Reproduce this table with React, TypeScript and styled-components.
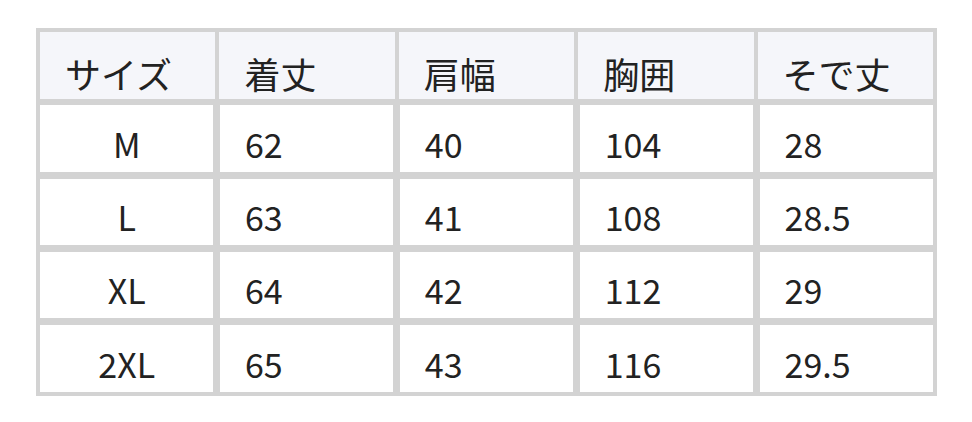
import styled, { createGlobalStyle } from 'styled-components';

const GlobalStyle = createGlobalStyle`
  body {
    margin: 0;
    background: #ffffff;
    font-family: "Noto Sans CJK JP", "Noto Sans", sans-serif;
  }
`;

const Page = styled.div`
  width: 972px;
  height: 422px;
  padding: 28px 0 0 36px;
  box-sizing: border-box;
`;

const Table = styled.div`
  width: 901px;
  box-sizing: border-box;
  padding: 4px;
  background: #d3d3d3;
  display: flex;
  flex-direction: column;
  gap: 6.7px;
`;

const Row = styled.div<{ $header?: boolean }>`
  display: grid;
  grid-template-columns: repeat(5, 1fr);
  column-gap: ${(p) => (p.$header ? '4px' : '6.5px')};
  height: 66.6px;
`;

const Cell = styled.div<{ $header?: boolean; $center?: boolean }>`
  display: flex;
  align-items: flex-end;
  justify-content: ${(p) => (p.$center ? 'center' : 'flex-start')};
  background: ${(p) => (p.$header ? '#f5f6fa' : '#ffffff')};
  padding: 0 0 ${(p) => (p.$header ? '8px' : '11px')} ${(p) => (p.$center ? '0' : '25px')};
  font-size: ${(p) => (p.$header ? '36px' : '34px')};
  line-height: 1;
  color: #222222;
  white-space: nowrap;
`;

const headers = ['サイズ', '着丈', '肩幅', '胸囲', 'そで丈'];

const rows = [
  ['M', '62', '40', '104', '28'],
  ['L', '63', '41', '108', '28.5'],
  ['XL', '64', '42', '112', '29'],
  ['2XL', '65', '43', '116', '29.5'],
];

function App() {
  return (
    <>
      <GlobalStyle />
      <Page>
        <Table>
          <Row $header>
            {headers.map((h) => (
              <Cell key={h} $header>
                {h}
              </Cell>
            ))}
          </Row>
          {rows.map((r) => (
            <Row key={r[0]}>
              {r.map((v, i) => (
                <Cell key={i} $center={i === 0}>
                  {v}
                </Cell>
              ))}
            </Row>
          ))}
        </Table>
      </Page>
    </>
  );
}

export default App;
